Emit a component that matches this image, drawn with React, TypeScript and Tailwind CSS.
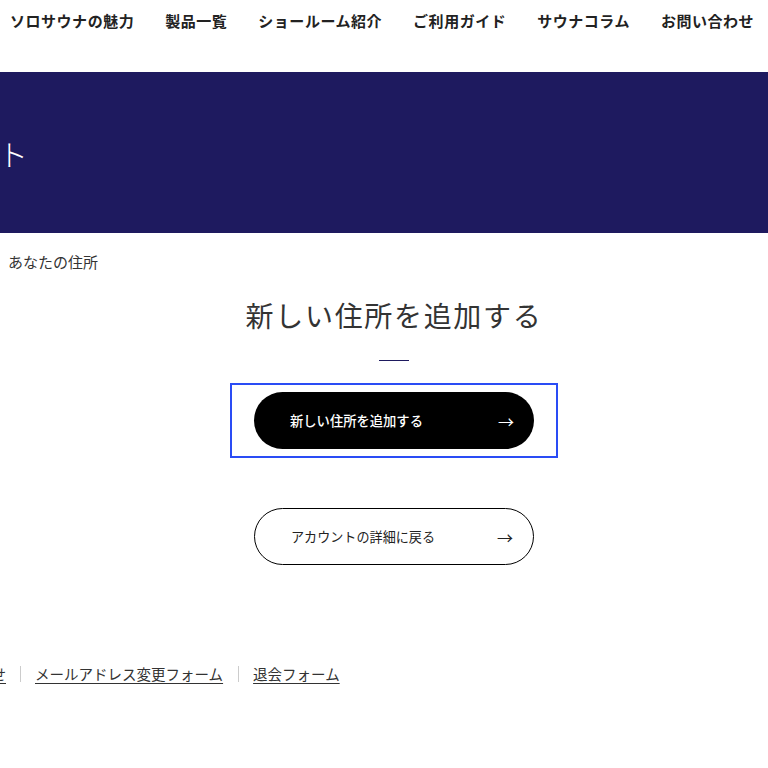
const navItems = ["ソロサウナの魅力", "製品一覧", "ショールーム紹介", "ご利用ガイド", "サウナコラム", "お問い合わせ"];

const jp = { fontFamily: '"Noto Sans CJK JP", "Noto Sans", sans-serif' };

export default function App() {
  return (
    <div className="w-[768px] h-[768px] overflow-hidden bg-white text-[#333]" style={jp}>
      <header className="h-[72px]">
        <nav className="flex gap-[31px] pl-[10px] pt-[10px] whitespace-nowrap">
          {navItems.map((item) => (
            <a key={item} className="text-[15px] font-bold leading-[22px] tracking-[0.035em] text-[#222]">
              {item}
            </a>
          ))}
        </nav>
      </header>

      <section className="h-[161px] bg-[#1e1a5f] flex items-center overflow-hidden">
        <h1 className="ml-[-122px] text-[30px] font-light leading-none text-white whitespace-nowrap">
          アカウント
        </h1>
      </section>

      <div className="pl-[8px] pt-[19px] text-[15px] leading-[20px] text-[#333] whitespace-nowrap">
        あなたの住所
      </div>

      <main className="flex flex-col items-center pl-[20px]">
        <h2 className="mt-[23px] text-[28px] font-normal leading-[40px] tracking-[0.06em] text-[#333]">
          新しい住所を追加する
        </h2>
        <div className="mt-[25px] h-px w-[30px] bg-[#1e1a5f]" />

        <div className="mt-[22px] border-2 border-[#2a4cf5] px-[22px] py-[7px]">
          <button className="flex h-[57px] w-[280px] items-center justify-between rounded-full bg-black pl-[36px] pr-[20px] text-white">
            <span className="text-[13.3px] font-medium">新しい住所を追加する</span>
            <span className="text-[16px] leading-none">→</span>
          </button>
        </div>

        <button className="mt-[50px] flex h-[57px] w-[280px] items-center justify-between rounded-full border border-black bg-white pl-[36px] pr-[20px] text-[#222]">
          <span className="text-[13.1px]">アカウントの詳細に戻る</span>
          <span className="text-[16px] leading-none">→</span>
        </button>
      </main>

      <footer className="mt-[99px] flex items-center whitespace-nowrap text-[14.5px] leading-[20px] text-[#333]">
        <a className="ml-[-81px] underline underline-offset-[3px]">お問い合わせ</a>
        <span className="mx-[14px] h-[16px] w-px bg-[#ccc]" />
        <a className="underline underline-offset-[3px]">メールアドレス変更フォーム</a>
        <span className="ml-[15px] mr-[14px] h-[16px] w-px bg-[#ccc]" />
        <a className="underline underline-offset-[3px]">退会フォーム</a>
      </footer>
    </div>
  );
}
